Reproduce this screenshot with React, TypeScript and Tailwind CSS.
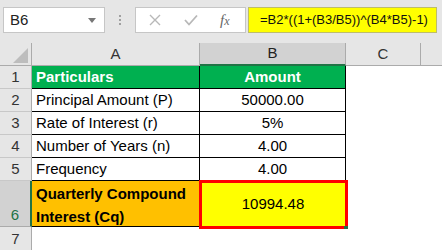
import React from "react";

const font = { fontFamily: '"Liberation Sans", Arial, sans-serif' };

function RowHead({ n, h, selected }: { n: string; h: string; selected?: boolean }) {
  return (
    <div
      className={`${h} w-[32px] shrink-0 flex items-end justify-center pb-[1px] border-b border-r ${
        selected
          ? "bg-[#d2d2d2] text-[#217346] border-r-[#217346] border-r-2 border-b-[#ababab]"
          : "bg-[#e6e6e6] text-[#333] border-b-[#c8c8c8] border-r-[#ababab]"
      } text-[15px] leading-[20px]`}
    >
      {n}
    </div>
  );
}

export default function App() {
  const rows = [
    ["2", "Principal Amount (P)", "50000.00"],
    ["3", "Rate of Interest (r)", "5%"],
    ["4", "Number of Years (n)", "4.00"],
    ["5", "Frequency", "4.00"],
  ];
  return (
    <div className="w-[442px] h-[250px] bg-white overflow-hidden text-black" style={font}>
      {/* formula bar */}
      <div className="h-[43px] bg-[#e6e6e6] flex items-start pt-[7px] pl-[3px]">
        <div className="w-[102px] h-[26px] bg-white border border-[#c6c6c6] flex items-center justify-between pl-[6px] pr-[8px]">
          <span className="text-[15px] text-[#222]">B6</span>
          <svg width="8" height="5" viewBox="0 0 8 5"><polygon points="0,0 8,0 4,5" fill="#777" /></svg>
        </div>
        <div className="w-[30px] h-[26px] flex flex-col items-center justify-center gap-[2px]">
          <div className="w-[2px] h-[2px] bg-[#a0a0a0]" />
          <div className="w-[2px] h-[2px] bg-[#a0a0a0]" />
          <div className="w-[2px] h-[2px] bg-[#a0a0a0]" />
        </div>
        <div className="w-[111px] h-[26px] bg-white border border-[#c6c6c6] flex items-center">
          <svg className="ml-[13px]" width="12" height="12" viewBox="0 0 12 12">
            <path d="M1 1 L11 11 M11 1 L1 11" stroke="#b8b8b8" strokeWidth="1.4" />
          </svg>
          <svg className="ml-[23px]" width="14" height="12" viewBox="0 0 14 12">
            <path d="M1 6 L5 10.5 L13 1.5" stroke="#b8b8b8" strokeWidth="1.8" fill="none" />
          </svg>
          <span
            className="ml-[22px] text-[15px] italic text-[#666]"
            style={{ fontFamily: '"Liberation Serif", serif' }}
          >
            f<span className="text-[12px]">x</span>
          </span>
        </div>
        <div className="ml-[2px] w-[189px] h-[26px] bg-[#ffff00] border border-[#bdbd6a] flex items-center pl-[11px] text-[13px] text-[#111] whitespace-nowrap">
          =B2*((1+(B3/B5))^(B4*B5)-1)
        </div>
      </div>
      {/* column headers */}
      <div className="flex h-[23px] bg-[#e6e6e6] text-[15px] text-[#333]">
        <div className="w-[32px] shrink-0 border-r border-b border-[#ababab] relative">
          <svg className="absolute left-[13px] top-[5px]" width="15" height="15" viewBox="0 0 15 15">
            <polygon points="15,0 15,15 0,15" fill="#bdbdbd" />
          </svg>
        </div>
        <div className="w-[168px] shrink-0 border-r border-b border-[#ababab] flex items-center justify-center">A</div>
        <div className="w-[146px] shrink-0 bg-[#d2d2d2] border-r border-r-[#ababab] border-b-2 border-b-[#217346] flex items-center justify-center text-[#222]">B</div>
        <div className="w-[75px] shrink-0 border-r border-b border-[#ababab] flex items-center justify-center">C</div>
        <div className="flex-1 border-b border-[#ababab]" />
      </div>
      {/* row 1 */}
      <div className="flex">
        <RowHead n="1" h="h-[23px]" />
        <div className="w-[168px] h-[23px] shrink-0 bg-[#00b050] border-r border-b border-black flex items-center pl-[4px] text-white font-bold text-[15px]">
          Particulars
        </div>
        <div className="w-[146px] h-[23px] shrink-0 bg-[#00b050] border-r border-b border-black flex items-center justify-center text-white font-bold text-[15px]">
          Amount
        </div>
      </div>
      {rows.map(([n, a, b]) => (
        <div className="flex" key={n}>
          <RowHead n={n} h="h-[23px]" />
          <div className="w-[168px] h-[23px] shrink-0 border-r border-b border-black flex items-center pl-[4px] text-[15px]">
            {a}
          </div>
          <div className="w-[146px] h-[23px] shrink-0 border-r border-b border-black flex items-center justify-center text-[15px]">
            {b}
          </div>
        </div>
      ))}
      {/* row 6 */}
      <div className="flex">
        <RowHead n="6" h="h-[46px]" selected />
        <div className="w-[168px] h-[46px] shrink-0 bg-[#ffc000] border-r border-b border-black flex flex-col justify-center pl-[4px] pt-[2px] text-[15px] font-bold leading-[23px]">
          <span>Quarterly Compound</span>
          <span>Interest (Cq)</span>
        </div>
        <div className="w-[146px] h-[46px] shrink-0 relative flex items-center justify-center text-[15px]">
          <div className="absolute -left-[1px] -top-[1px] w-[149px] h-[49px] bg-[#ffff00] border-[3px] border-[#ff0000]" />
          <span className="relative">10994.48</span>
          <div className="absolute left-[144px] top-[45px] w-[4px] h-[3px] bg-[#217346]" />
        </div>
      </div>
      {/* row 7 */}
      <div className="flex">
        <RowHead n="7" h="h-[24px]" />
      </div>
    </div>
  );
}
